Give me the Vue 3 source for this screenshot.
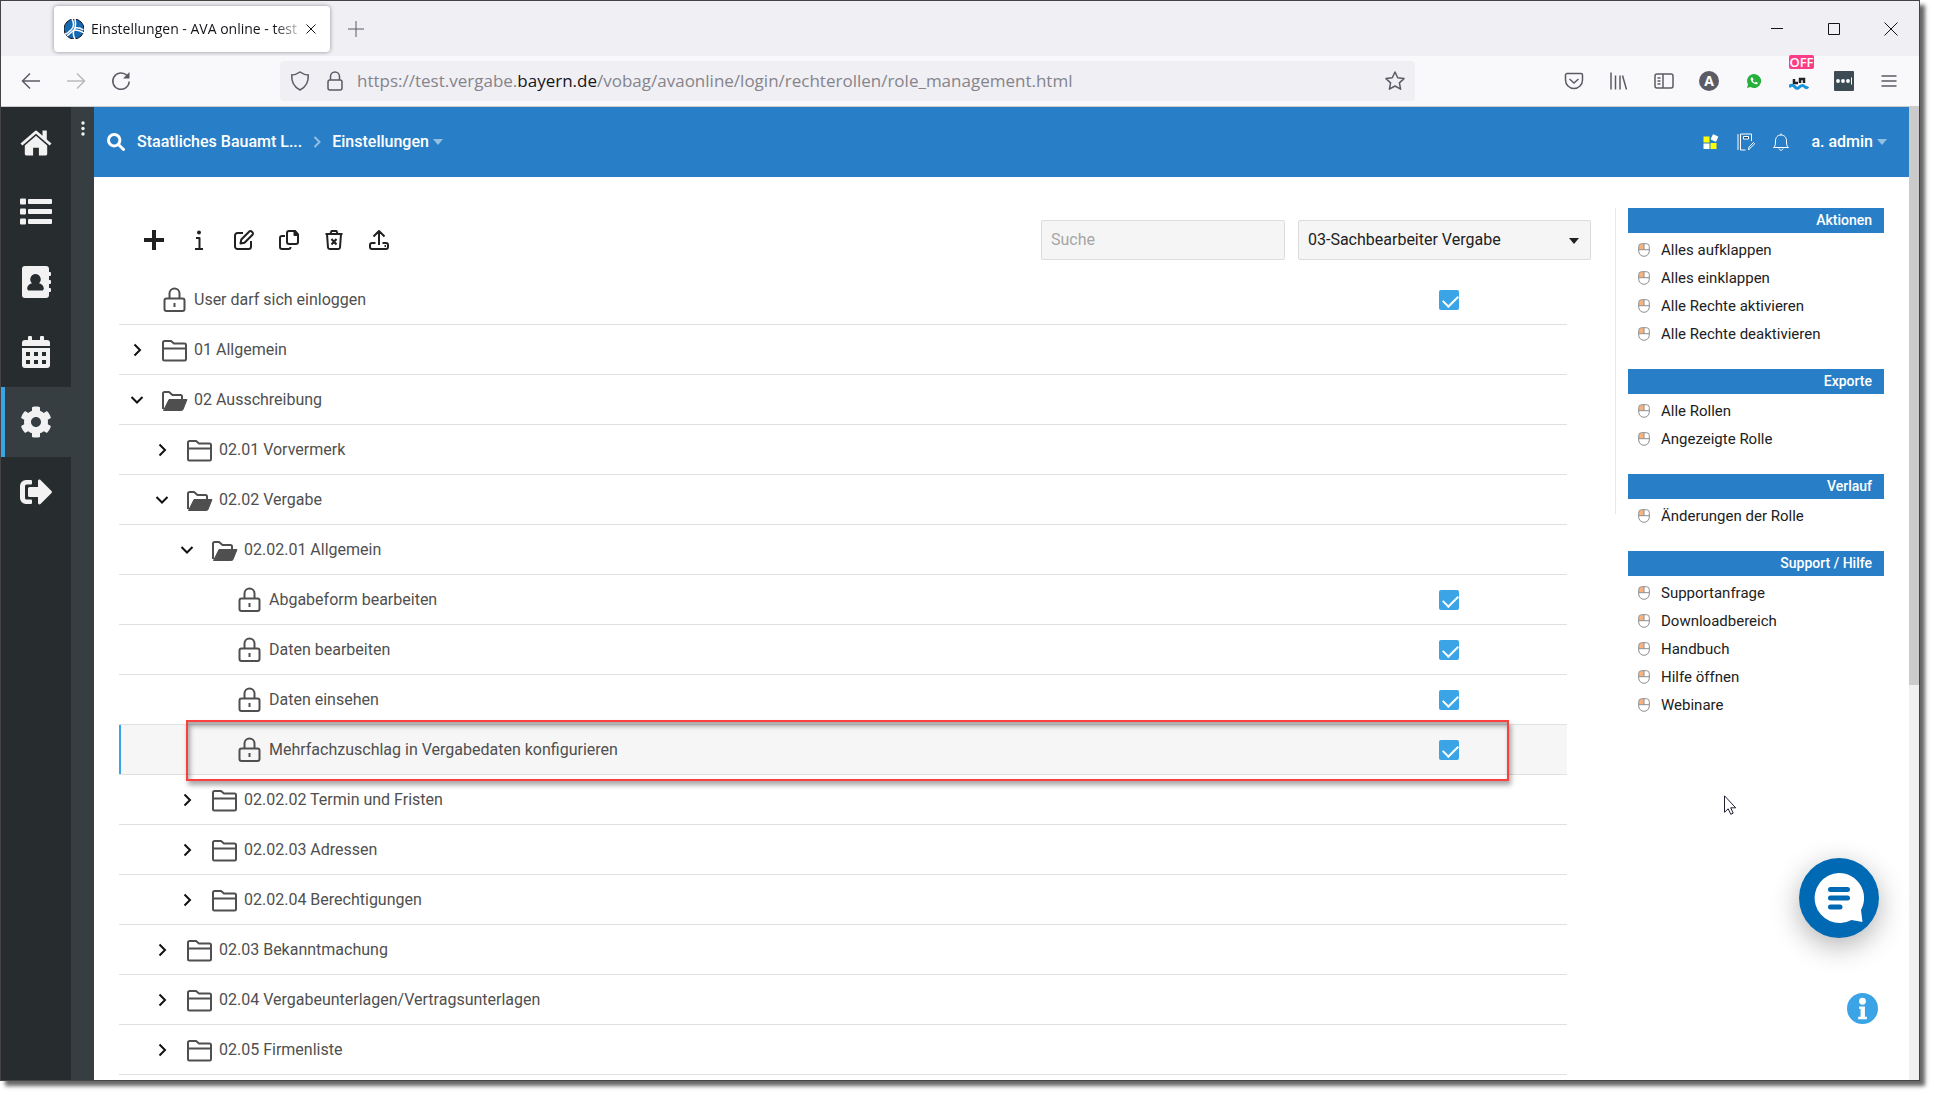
<script setup>
import { ref } from 'vue'

const search = ref('')
const role = ref('03-Sachbearbeiter Vergabe')

const railItems = [
  { label: 'Start', view: '0 0 32 32', art: '<path d="M16 4.500a1.500 1.500 0 0 1 1 .4l5.500 4.800V4.500h4.300v9l4.700 4.100-1.900 2L16 7.700 2.400 19.600l-1.900-2L15 4.900a1.500 1.500 0 0 1 1-.4z"/><path d="M16 9.800l11.200 9.800V28a1.400 1.400 0 0 1-1.400 1.400h-6.900v-7.600h-5.800v7.600H6.200A1.400 1.400 0 0 1 4.800 28v-8.400z"/>' },
  { label: 'Listen', view: '0 0 32 32', art: '<rect y="2.500" width="6" height="6" rx="1"/><rect x="8" y="3" width="24" height="5" rx="1"/><rect y="12.500" width="6" height="6" rx="1"/><rect x="8" y="13" width="24" height="5" rx="1"/><rect y="22.500" width="6" height="6" rx="1"/><rect x="8" y="23" width="24" height="5" rx="1"/>' },
  { label: 'Adressen', view: '0 0 32 32', art: '<path fill-rule="evenodd" d="M5 0h21a3 3 0 0 1 3 3v3h1a1 1 0 0 1 1 1v2a1 1 0 0 1-1 1h-1v4h1a1 1 0 0 1 1 1v2a1 1 0 0 1-1 1h-1v4h1a1 1 0 0 1 1 1v2a1 1 0 0 1-1 1h-1v3a3 3 0 0 1-3 3H5a3 3 0 0 1-3-3V3a3 3 0 0 1 3-3zm10.500 8a5.300 5.300 0 0 0-3.500 9.200c-3 .8-4.800 2.600-4.800 5.300 0 1.200.8 2.100 2 2.100h12.600c1.200 0 2-.9 2-2.100 0-2.700-1.800-4.500-4.800-5.300A5.300 5.300 0 0 0 15.500 8z"/>' },
  { label: 'Kalender', view: '0 0 32 32', art: '<path d="M8 1a1 1 0 0 1 1-1h2a1 1 0 0 1 1 1v3h8V1a1 1 0 0 1 1-1h2a1 1 0 0 1 1 1v3h3a3 3 0 0 1 3 3v3H2V7a3 3 0 0 1 3-3h3z"/><path fill-rule="evenodd" d="M2 12h28v17a3 3 0 0 1-3 3H5a3 3 0 0 1-3-3zm4 4v4h4v-4zm8 0v4h4v-4zm8 0v4h4v-4zM6 24v4h4v-4zm8 0v4h4v-4zm8 0v4h4v-4z"/>' },
  { label: 'Einstellungen', active: true, view: '0 0 512 512', art: '<path d="M487.4 315.7l-42.6-24.6c4.3-23.2 4.3-47 0-70.2l42.6-24.6c4.9-2.8 7.1-8.6 5.5-14-11.1-35.6-30-67.8-54.7-94.6-3.8-4.1-10-5.1-14.8-2.3L380.8 110c-17.9-15.4-38.5-27.3-60.8-35.1V25.800c0-5.6-3.9-10.5-9.4-11.7-36.7-8.2-74.3-7.8-109.2 0-5.5 1.2-9.4 6.1-9.4 11.7V75c-22.200 7.9-42.8 19.8-60.8 35.1L88.700 85.500c-4.900-2.800-11-1.900-14.800 2.300-24.700 26.700-43.600 58.900-54.700 94.600-1.700 5.400.6 11.200 5.500 14L67.300 221c-4.300 23.200-4.300 47 0 70.200l-42.600 24.600c-4.900 2.800-7.100 8.600-5.500 14 11.100 35.600 30 67.800 54.700 94.600 3.800 4.100 10 5.100 14.800 2.300l42.600-24.600c17.900 15.400 38.500 27.300 60.800 35.100v49.200c0 5.600 3.900 10.500 9.400 11.700 36.700 8.200 74.300 7.800 109.200 0 5.500-1.200 9.400-6.100 9.400-11.700v-49.200c22.200-7.900 42.800-19.800 60.800-35.100l42.600 24.600c4.900 2.800 11 1.900 14.800-2.300 24.700-26.700 43.600-58.900 54.700-94.600 1.500-5.500-.7-11.300-5.600-14.100zM256 336c-44.100 0-80-35.900-80-80s35.900-80 80-80 80 35.900 80 80-35.900 80-80 80z"/>' },
  { label: 'Abmelden', view: '0 0 32 32', art: '<path d="M12 5v2.500a1 1 0 0 1-1 1H6.500a1.500 1.500 0 0 0-1.500 1.500v12A1.500 1.500 0 0 0 6.500 23.500H11a1 1 0 0 1 1 1V27a1 1 0 0 1-1 1H6a6 6 0 0 1-6-6V10a6 6 0 0 1 6-6h5a1 1 0 0 1 1 1z"/><path d="M31.500 17L20.500 28c-.9.900-2.500.3-2.500-1v-6h-8.500A1.500 1.500 0 0 1 8 19.500v-7A1.500 1.500 0 0 1 9.500 11H18V5c0-1.300 1.600-1.900 2.500-1l11 11a1.500 1.500 0 0 1 0 2z"/>' }
]

const tools = [
  { label: 'Neu', art: '<path fill="currentColor" stroke="none" d="M8 0h4v8h8v4h-8v8H8v-8H0V8h8z"/>' },
  { label: 'Info', art: '<circle cx="10" cy="2.500" r="2" fill="currentColor" stroke="none"/><path d="M7 8h3.500v11M6 19h8"/>' },
  { label: 'Bearbeiten', art: '<path d="M9 3H3.500A2.500 2.500 0 0 0 1 5.500v11A2.500 2.500 0 0 0 3.500 19h11a2.500 2.500 0 0 0 2.500-2.500V11"/><path d="M6.500 13.500l.8-4 8-8a1.600 1.600 0 0 1 2.300 0l.9.900a1.600 1.600 0 0 1 0 2.300l-8 8z"/>' },
  { label: 'Kopieren', art: '<path d="M10 1h6l3 3.500V12a2 2 0 0 1-2 2h-7a2 2 0 0 1-2-2V3a2 2 0 0 1 2-2z"/><path fill="currentColor" d="M15.500 1v4H19z"/><path d="M6 6H3a2 2 0 0 0-2 2v9a2 2 0 0 0 2 2h6.500a2 2 0 0 0 2-2"/>' },
  { label: 'Löschen', art: '<path d="M1.500 4h17M6.500 3.500l1-2.500h5l1 2.500M3 4l1 13.500A1.600 1.600 0 0 0 5.600 19h8.800a1.600 1.600 0 0 0 1.600-1.500L17 4M7.500 9l5 5.500M12.500 9l-5 5.500"/>' },
  { label: 'Exportieren', art: '<path d="M10 15V1.500M4.500 6.500L10 1l5.500 5.500M6.500 13H3a2 2 0 0 0-2 2v2a2 2 0 0 0 2 2h14a2 2 0 0 0 2-2v-2a2 2 0 0 0-2-2h-3.500M15.500 16h1.500"/>' }
]

const rows = ref([
  { text: 'User darf sich einloggen', level: 0, kind: 'right', on: true },
  { text: '01 Allgemein', level: 0, kind: 'closed' },
  { text: '02 Ausschreibung', level: 0, kind: 'open' },
  { text: '02.01 Vorvermerk', level: 1, kind: 'closed' },
  { text: '02.02 Vergabe', level: 1, kind: 'open' },
  { text: '02.02.01 Allgemein', level: 2, kind: 'open' },
  { text: 'Abgabeform bearbeiten', level: 3, kind: 'right', on: true },
  { text: 'Daten bearbeiten', level: 3, kind: 'right', on: true },
  { text: 'Daten einsehen', level: 3, kind: 'right', on: true },
  { text: 'Mehrfachzuschlag in Vergabedaten konfigurieren', level: 3, kind: 'right', on: true, selected: true },
  { text: '02.02.02 Termin und Fristen', level: 2, kind: 'closed' },
  { text: '02.02.03 Adressen', level: 2, kind: 'closed' },
  { text: '02.02.04 Berechtigungen', level: 2, kind: 'closed' },
  { text: '02.03 Bekanntmachung', level: 1, kind: 'closed' },
  { text: '02.04 Vergabeunterlagen/Vertragsunterlagen', level: 1, kind: 'closed' },
  { text: '02.05 Firmenliste', level: 1, kind: 'closed' }
])

const kindArt = {
  right: '<path d="M7.500 11V6.500a5 5 0 0 1 10 0V11"/><rect x="2.500" y="11.500" width="20" height="12.500" rx="2"/><path d="M12.500 16v4"/>',
  closed: '<path d="M1 5.500A1.500 1.500 0 0 1 2.500 4H9l3 2.500h10.500A1.500 1.500 0 0 1 24 8v14a1.500 1.500 0 0 1-1.500 1.500h-20A1.500 1.500 0 0 1 1 22zM1 11.500h23"/>',
  open: '<path d="M1 22V6.500A1.500 1.500 0 0 1 2.500 5H7l3.500 3h8A1.500 1.500 0 0 1 20 9.500V12"/><path fill="currentColor" stroke-width="1" d="M7 12.500h18L21 22.500a1.500 1.500 0 0 1-1.400 1H1.500z"/>'
}

const groups = [
  { title: 'Aktionen', links: ['Alles aufklappen', 'Alles einklappen', 'Alle Rechte aktivieren', 'Alle Rechte deaktivieren'] },
  { title: 'Exporte', links: ['Alle Rollen', 'Angezeigte Rolle'] },
  { title: 'Verlauf', links: ['Änderungen der Rolle'] },
  { title: 'Support / Hilfe', links: ['Supportanfrage', 'Downloadbereich', 'Handbuch', 'Hilfe öffnen', 'Webinare'] }
]
</script>

<template>
  <div class="desktop">
    <div class="window">
      <div class="tabs">
        <div class="tab">
          <svg class="s20" viewBox="0 0 20 20">
            <circle cx="10" cy="10" r="10" fill="#1469b3" />
            <g fill="none" stroke="#fff" stroke-width="1.500">
              <path d="M8 0c2 4 2 8-.5 10.500S2 15 1 15" /><path d="M11 0c1 5 1 8-1 11-2 2-5 4-7 6" />
              <path d="M10 11c3-.5 7 1 10 3M10.500 9c3-.5 6 0 9 2" /><path d="M10 11c-1 3-1 6 1 9" />
            </g>
          </svg>
          <span class="tab-title">Einstellungen - AVA online - test</span>
          <button class="bare" aria-label="Tab schließen"><svg class="s10" viewBox="0 0 10 10"><path d="M.5.5l9 9M9.500.5l-9 9" /></svg></button>
        </div>
        <button class="bare new-tab" aria-label="Neuer Tab"><svg class="s16" viewBox="0 0 16 16"><path d="M8 0v16M0 8h16" /></svg></button>
        <div class="win-buttons">
          <button class="bare" aria-label="Minimieren"><svg class="s14" viewBox="0 0 14 14"><path d="M1 6.500h12" /></svg></button>
          <button class="bare" aria-label="Maximieren"><svg class="s14" viewBox="0 0 14 14"><path d="M1.500 1.500h11v11h-11z" /></svg></button>
          <button class="bare" aria-label="Schließen"><svg class="s14" viewBox="0 0 14 14"><path d="M.5.5l13 13M13.500.5l-13 13" /></svg></button>
        </div>
      </div>

      <div class="nav">
        <div class="nav-left">
          <button class="bare" aria-label="Zurück"><svg class="s20" viewBox="0 0 20 20"><path d="M19 10H2M9 2.500L1.500 10 9 17.500" /></svg></button>
          <button class="bare faded" aria-label="Vorwärts"><svg class="s20" viewBox="0 0 20 20"><path d="M1 10h17M11 2.500l7.500 7.500-7.500 7.500" /></svg></button>
          <button class="bare" aria-label="Neu laden"><svg class="s20" viewBox="0 0 20 20"><path d="M16 4.500a8.200 8.200 0 1 0 2.200 6" /><path d="M18.500 1v6.500H12z" fill="currentColor" stroke="none" /></svg></button>
        </div>
        <div class="url">
          <svg class="s20" viewBox="0 0 20 20"><path d="M10 1c2.500 1.800 5 2.800 8.300 3C18.600 11 16 16 10 19 4 16 1.400 11 1.700 4 5 3.800 7.500 2.800 10 1z" /></svg>
          <svg class="s20 lock" viewBox="0 0 20 20"><path d="M5.500 9V5.500a4.500 4.500 0 0 1 9 0V9" /><rect x="3" y="9" width="14" height="10" rx="2" /></svg>
          <span class="address">https://test.vergabe.<b>bayern.de</b>/vobag/avaonline/login/rechterollen/role_management.html</span>
          <button class="bare" aria-label="Lesezeichen"><svg class="s20" viewBox="0 0 20 20"><path stroke-linejoin="round" d="M10 1l2.700 5.800 6.300.8-4.600 4.300 1.200 6.300L10 15l-5.600 3.200 1.200-6.300L1 7.600l6.300-.8z" /></svg></button>
        </div>
        <div class="addons">
          <button class="bare" aria-label="Pocket"><svg class="s20" viewBox="0 0 20 20"><path d="M3 2.500h14A1.500 1.500 0 0 1 18.500 4v5a8.500 8.500 0 0 1-17 0V4A1.500 1.500 0 0 1 3 2.500zM5.500 8l4.500 4 4.500-4" /></svg></button>
          <button class="bare" aria-label="Bibliothek"><svg class="s20" viewBox="0 0 20 20"><path d="M2 1.500v17M6.500 4.500v14M11 4.500v14M13.500 4.500l4 14" /></svg></button>
          <button class="bare" aria-label="Seitenleiste"><svg class="s20" viewBox="0 0 20 20"><rect x="1" y="3" width="18" height="14" rx="2" /><path d="M9 3v14M3.500 7h3M3.500 10h3M3.500 13h3" /></svg></button>
          <button class="bare round-a" aria-label="Konto">A</button>
          <button class="bare" aria-label="WhatsApp"><svg class="s20" viewBox="0 0 20 20"><path d="M10 3a7 7 0 1 1-3.500 13L3 17l1-3.500A7 7 0 0 1 10 3z" fill="#25b03c" stroke="none" /><path d="M7.200 6.500c-1.500 1.500.4 6 4.800 6.800 1 .2 1.900-.8 1.900-1.500l-2-1-.9.900c-1-.3-2-1.300-2.300-2.200l.8-.9-.9-2z" fill="#fff" stroke="none" /></svg></button>
          <button class="bare off" aria-label="Erweiterung">
            <svg class="s20" viewBox="0 0 20 20"><path d="M5 8v4h4M11 12V8h4v4" stroke="#222" stroke-width="2.500" /><path d="M0 16c2-2.500 4-2.500 6 0s3.500 1 5-.5 3.500-1.500 4.500 0 2.500 1.500 3.500 0" stroke="#1a93d8" stroke-width="3" /></svg>
            <span class="off-badge">OFF</span>
          </button>
          <button class="bare" aria-label="Passwörter"><svg class="s20" viewBox="0 0 20 20"><rect width="20" height="20" rx="1" fill="#3d4b55" stroke="none" /><g fill="#fff" stroke="none"><circle cx="4" cy="10" r="1.900" /><circle cx="9" cy="10" r="1.900" /><circle cx="14" cy="10" r="1.900" /><path d="M17 6.500h1v7h-1z" /></g></svg></button>
          <button class="bare" aria-label="Menü"><svg class="s20" viewBox="0 0 20 20"><path d="M2.500 5h15M2.500 10h15M2.500 15h15" /></svg></button>
        </div>
      </div>

      <div class="page">
        <nav class="rail">
          <a v-for="item in railItems" :key="item.label" href="#" class="rail-item" :class="{ active: item.active }" :aria-label="item.label">
            <svg class="s32" :viewBox="item.view" v-html="item.art" />
          </a>
        </nav>
        <div class="strip">
          <button class="bare" aria-label="Mehr"><svg class="dots" viewBox="0 0 4 16"><circle cx="2" cy="2" r="1.700" /><circle cx="2" cy="7.500" r="1.700" /><circle cx="2" cy="13" r="1.700" /></svg></button>
        </div>

        <div class="main">
          <header class="bar">
            <button class="bare find" aria-label="Suchen"><svg class="s18" viewBox="0 0 18 18"><circle cx="7.200" cy="7.200" r="5.700" /><path d="M11.500 11.500l5 5" /></svg></button>
            <a href="#" class="crumb">Staatliches Bauamt L...</a>
            <svg class="crumb-sep" viewBox="0 0 8 12"><path d="M1.500 1l5 5-5 5" /></svg>
            <a href="#" class="crumb drop">Einstellungen</a>
            <div class="bar-right">
              <button class="bare" aria-label="Module"><svg class="s18" viewBox="0 0 18 18"><path d="M1.500 3.500h6v6h-6zM8.500 10h6v6h-6z" fill="#ff0" /><path d="M1.500 10.500h6V16h-6z" fill="#fff" /><rect x="9.500" y="2" width="6" height="6" rx="1" fill="#fff" transform="rotate(25 12.500 5)" /></svg></button>
              <button class="bare thin" aria-label="Notizbuch"><svg class="s18" viewBox="0 0 18 18"><path d="M1 1v16M3.500 1v16h5M3.500 1h11v7M11.500 17l.5-3 4.500-4.500 1.200 1.200-4.500 4.500z" /><path d="M6.500 3.500h5v2.500h-5z" fill="#14456f" /></svg></button>
              <button class="bare thin" aria-label="Mitteilungen"><svg class="s18" viewBox="0 0 18 18"><path d="M1.500 14.500c2-1.500 2-3.500 2-6.500 0-3.500 2-6 5.500-6s5.500 2.500 5.500 6c0 3 0 5 2 6.500zM9 2V.5M7 15.500c.5 2.300 3.500 2.300 4 0" /></svg></button>
              <a href="#" class="crumb drop">a. admin</a>
            </div>
          </header>

          <div class="body">
            <section class="content">
              <div class="toolbar">
                <button v-for="t in tools" :key="t.label" class="bare tool" :aria-label="t.label">
                  <svg class="s20" viewBox="0 0 20 20" v-html="t.art" />
                </button>
                <input v-model="search" class="field search" type="text" placeholder="Suche" aria-label="Suche" />
                <div class="select-wrap">
                  <select v-model="role" class="field" aria-label="Rolle">
                    <option>03-Sachbearbeiter Vergabe</option>
                  </select>
                </div>
              </div>

              <ul class="tree">
                <li v-for="(r, i) in rows" :key="r.text" class="row" :class="['level-' + r.level, { selected: r.selected }]">
                  <span v-if="r.kind === 'right'" class="toggle" />
                  <button v-else class="bare toggle" :aria-label="r.kind === 'open' ? 'Einklappen' : 'Aufklappen'">
                    <svg class="s14" viewBox="0 0 14 14"><path :d="r.kind === 'open' ? 'M1.500 4L7 9.500 12.500 4' : 'M4.500 1.500L10 7l-5.500 5.500'" /></svg>
                  </button>
                  <svg class="kind" viewBox="0 0 26 26" v-html="kindArt[r.kind]" />
                  <label :for="'right-' + i" class="name">{{ r.text }}</label>
                  <input v-if="r.kind === 'right'" :id="'right-' + i" v-model="r.on" class="check" type="checkbox" />
                  <span v-if="r.selected" class="marker" />
                </li>
              </ul>
            </section>

            <div class="divider" />

            <aside class="side">
              <section v-for="g in groups" :key="g.title" class="group">
                <h2>{{ g.title }}</h2>
                <ul>
                  <li v-for="l in g.links" :key="l">
                    <svg class="mouse" viewBox="0 0 12 14"><path d="M1 6.500V3.500A2.500 2.500 0 0 1 3.500 1H6v5.500z" fill="#f9b27c" /><path d="M3.500.7h5a2.800 2.800 0 0 1 2.800 2.800V8a5.300 5.300 0 0 1-10.600 0V3.500A2.800 2.800 0 0 1 3.500.7zM.7 6.700h10.600M6 .7v6" /></svg>
                    <a href="#">{{ l }}</a>
                  </li>
                </ul>
              </section>
            </aside>
          </div>
        </div>

        <div class="scroll"><div class="thumb" /></div>
      </div>

      <button class="bare chat" aria-label="Chat">
        <svg viewBox="0 0 50 50"><path d="M25 0a25 25 0 0 1 22 37l1.500 12-11-2A25 25 0 1 1 25 0z" fill="#fff" /><path d="M16.500 16.500h17M16.500 25h17M16.500 34h9.500" stroke="#0069b4" stroke-width="5" stroke-linecap="round" /></svg>
      </button>
      <button class="bare info" aria-label="Information">
        <svg viewBox="0 0 32 32"><circle cx="16" cy="16" r="16" fill="#3aa4e6" /><circle cx="16" cy="8.500" r="3.500" fill="#fff" /><path d="M12.500 14h6v10.500h2V27h-9v-2.500h2.500v-8h-1.500z" fill="#fff" /></svg>
      </button>
      <svg class="cursor" viewBox="0 0 13 20"><path d="M.5.8v16.500l3.700-3.500 2.600 5.500 2.400-1.200-2.500-5.300h5z" /></svg>
    </div>
  </div>
</template>

<style>
body {
  margin: 0;
  background: #fff;
}
</style>

<style scoped>
* {
  box-sizing: border-box;
}
.desktop {
  padding: 0 15px 15px 0;
  font-family: Roboto, "Liberation Sans", sans-serif;
  font-size: 16px;
  color: #212121;
}
.window {
  position: relative;
  display: flex;
  flex-direction: column;
  min-height: calc(100vh - 15px);
  border: 1px solid #444;
  background: #fff;
  box-shadow: 5px 5px 4px rgba(0, 0, 0, 0.6);
}
svg {
  display: block;
  flex: none;
}
ul {
  list-style: none;
  margin: 0;
  padding: 0;
}
a {
  color: inherit;
  text-decoration: none;
}
.bare {
  display: flex;
  align-items: center;
  justify-content: center;
  margin: 0;
  padding: 0;
  border: 0;
  background: none;
  color: inherit;
  font: inherit;
}
.s10 { width: 10px; height: 10px; }
.s14 { width: 14px; height: 14px; }
.s16 { width: 16px; height: 16px; }
.s18 { width: 18px; height: 18px; }
.s20 { width: 20px; height: 20px; }
.s32 { width: 32px; height: 32px; }

/* Browser chrome */
.tabs {
  display: flex;
  align-items: center;
  height: 55px;
  padding: 0 21px 0 53px;
  background: #f0eff4;
  color: #15141a;
}
.tabs svg,
.nav svg {
  fill: none;
  stroke: currentColor;
}
.tab {
  display: flex;
  align-items: center;
  width: 276px;
  height: 46px;
  padding: 0 14px 0 10px;
  border-radius: 4px;
  background: #fff;
  box-shadow: 0 0 4px rgba(0, 0, 0, 0.4);
}
.tab-title {
  flex: 1;
  min-width: 0;
  margin-left: 7px;
  overflow: hidden;
  white-space: nowrap;
  font: 14px/20px "Open Sans", "Noto Sans", sans-serif;
  mask-image: linear-gradient(to left, transparent, #000 32px);
}
.new-tab {
  margin-left: 18px;
  color: #5b5b66;
}
.win-buttons {
  display: flex;
  gap: 43px;
  margin-left: auto;
}
.nav {
  display: flex;
  align-items: center;
  height: 51px;
  padding: 0 20px 0 20px;
  border-bottom: 1px solid #ccc;
  background: #f9f9fb;
  color: #5b5b66;
}
.nav svg {
  stroke-width: 1.5;
}
.nav-left {
  display: flex;
  gap: 25px;
  width: 259px;
}
.faded {
  opacity: 0.4;
}
.url {
  display: flex;
  align-items: center;
  flex: 1;
  height: 40px;
  padding: 0 10px;
  border-radius: 4px;
  background: #f0eff4;
}
.lock {
  margin-left: 15px;
}
.address {
  flex: 1;
  margin-left: 12px;
  white-space: nowrap;
  font: 17px/24px "Open Sans", "Noto Sans", sans-serif;
  color: #85848b;
}
.address b {
  font-weight: 400;
  color: #15141a;
}
.addons {
  display: flex;
  gap: 25px;
  margin-left: 149px;
}
.round-a {
  width: 20px;
  height: 20px;
  border-radius: 50%;
  background: #5b5b66;
  color: #fff;
  font: 700 14px/20px "Open Sans", sans-serif;
}
.off {
  position: relative;
}
.off-badge {
  position: absolute;
  left: 0;
  top: -16px;
  width: 25px;
  overflow: hidden;
  border-radius: 2px;
  background: #fb3c87;
  color: #fff;
  font: 600 13px/14px "Open Sans", sans-serif;
  text-align: center;
}

/* Application */
.page {
  display: flex;
  flex: 1;
}
.rail {
  width: 70px;
  background: #272c2f;
}
.rail-item {
  display: flex;
  align-items: center;
  justify-content: center;
  height: 70px;
  fill: #f2f2f2;
}
.rail-item.active {
  background: #363e42;
  box-shadow: inset 4px 0 #3aa4e6;
}
.strip {
  width: 23px;
  padding: 14px 0 0 10px;
  background: #363e42;
}
.dots {
  width: 4px;
  height: 16px;
  fill: #f2f2f2;
}
.main {
  flex: 1;
  min-width: 0;
}
.bar {
  display: flex;
  align-items: center;
  height: 70px;
  padding: 0 22px 0 13px;
  background: #297fc7;
  color: #fff;
}
.find svg {
  fill: none;
  stroke: #fff;
  stroke-width: 3;
  stroke-linecap: round;
}
.crumb {
  font-weight: 500;
  line-height: 24px;
}
.find + .crumb {
  margin-left: 12px;
}
.crumb-sep {
  width: 8px;
  height: 12px;
  margin: 0 11px;
  fill: none;
  stroke: #94bfe3;
  stroke-width: 2;
}
.drop {
  display: flex;
  align-items: center;
  gap: 4px;
}
.drop::after {
  content: "";
  border: 5px solid transparent;
  border-top: 6px solid #94bfe3;
  border-bottom: 0;
}
.bar-right {
  display: flex;
  align-items: center;
  gap: 17px;
  margin-left: auto;
}
.bar-right .crumb {
  margin-left: 4px;
}
.thin svg {
  fill: none;
  stroke: #fff;
}
.body {
  display: flex;
  align-items: flex-start;
  padding: 31px 25px 5px;
}
.content {
  flex: 1;
  min-width: 0;
}
.toolbar {
  display: flex;
  align-items: center;
  height: 67px;
  padding: 0 12px 4px 25px;
}
.tool {
  width: 20px;
  margin-right: 25px;
}
.tool svg {
  fill: none;
  stroke: currentColor;
  stroke-width: 2;
  stroke-linejoin: round;
}
.field {
  width: 100%;
  height: 40px;
  padding: 0 9px;
  border: 1px solid #dcdcdc;
  border-radius: 2px;
  background: #f5f5f5;
  color: #212121;
  font: 16px/24px Roboto, sans-serif;
  appearance: none;
}
.search {
  width: 244px;
  margin: 0 13px 0 auto;
}
.search::placeholder {
  color: #a6a6a6;
}
.select-wrap {
  position: relative;
  width: 293px;
}
.select-wrap::after {
  content: "";
  position: absolute;
  right: 12px;
  top: 18px;
  border: 5px solid transparent;
  border-top: 6px solid #212121;
  border-bottom: 0;
  pointer-events: none;
}
.tree {
  margin-right: 36px;
}
.row {
  position: relative;
  display: flex;
  align-items: center;
  height: 50px;
  padding: 0 108px 0 11px;
  border-bottom: 1px solid #e0e0e0;
}
.level-1 { padding-left: 36px; }
.level-2 { padding-left: 61px; }
.level-3 { padding-left: 86px; }
.selected {
  background: #f6f6f6;
  box-shadow: inset 2px 0 #3aa4e6;
}
.toggle {
  width: 14px;
  height: 14px;
}
.toggle svg {
  fill: none;
  stroke: #111;
  stroke-width: 2;
}
.kind {
  width: 26px;
  height: 26px;
  margin: 0 6px 0 18px;
  fill: none;
  stroke: #4f4f4f;
  color: #4f4f4f;
  stroke-width: 2;
}
.name {
  color: #4f4f4f;
  line-height: 24px;
}
.check {
  width: 20px;
  height: 20px;
  margin: 0 0 0 auto;
  border-radius: 2px;
  background: #3aa4e6;
  appearance: none;
}
.check:checked::before {
  content: "";
  display: block;
  width: 13px;
  height: 7px;
  margin: 5px 0 0 4px;
  border: solid #fff;
  border-width: 0 0 2px 2px;
  transform: rotate(-45deg);
}
.marker {
  position: absolute;
  inset: -5px 58px -7px 67px;
  border: 2px solid #fb4040;
  box-shadow: 2px 4px 5px rgba(0, 0, 0, 0.35), inset 2px 4px 5px rgba(0, 0, 0, 0.35);
  pointer-events: none;
}
.divider {
  width: 1px;
  height: 306px;
  margin: 0 12px;
  background: #e8e8e8;
}
.side {
  width: 256px;
  font-size: 15px;
}
.group {
  margin-bottom: 21px;
}
.group h2 {
  margin: 0 0 3px;
  padding-right: 12px;
  background: #297fc7;
  color: #fff;
  font-size: 14px;
  font-weight: 500;
  line-height: 25px;
  text-align: right;
}
.group li {
  display: flex;
  align-items: center;
  gap: 11px;
  height: 28px;
  padding-left: 10px;
}
.mouse {
  width: 12px;
  height: 14px;
  fill: none;
  stroke: #8e8e8e;
}
.mouse path:first-child {
  stroke: none;
}
.scroll {
  width: 10px;
  background: #f0f0f0;
}
.thumb {
  height: 578px;
  background: #cbcbcb;
}

/* Floating controls */
.chat {
  position: absolute;
  right: 40px;
  bottom: 142px;
  width: 80px;
  height: 80px;
  border-radius: 50%;
  background: #0069b4;
  box-shadow: 0 8px 28px rgba(0, 0, 0, 0.3);
}
.chat svg {
  width: 50px;
  height: 50px;
}
.info {
  position: absolute;
  right: 41px;
  bottom: 56px;
}
.info svg {
  width: 31px;
  height: 31px;
}
.cursor {
  position: absolute;
  right: 182px;
  bottom: 265px;
  width: 13px;
  height: 20px;
  fill: #fff;
  stroke: #223;
}
</style>
